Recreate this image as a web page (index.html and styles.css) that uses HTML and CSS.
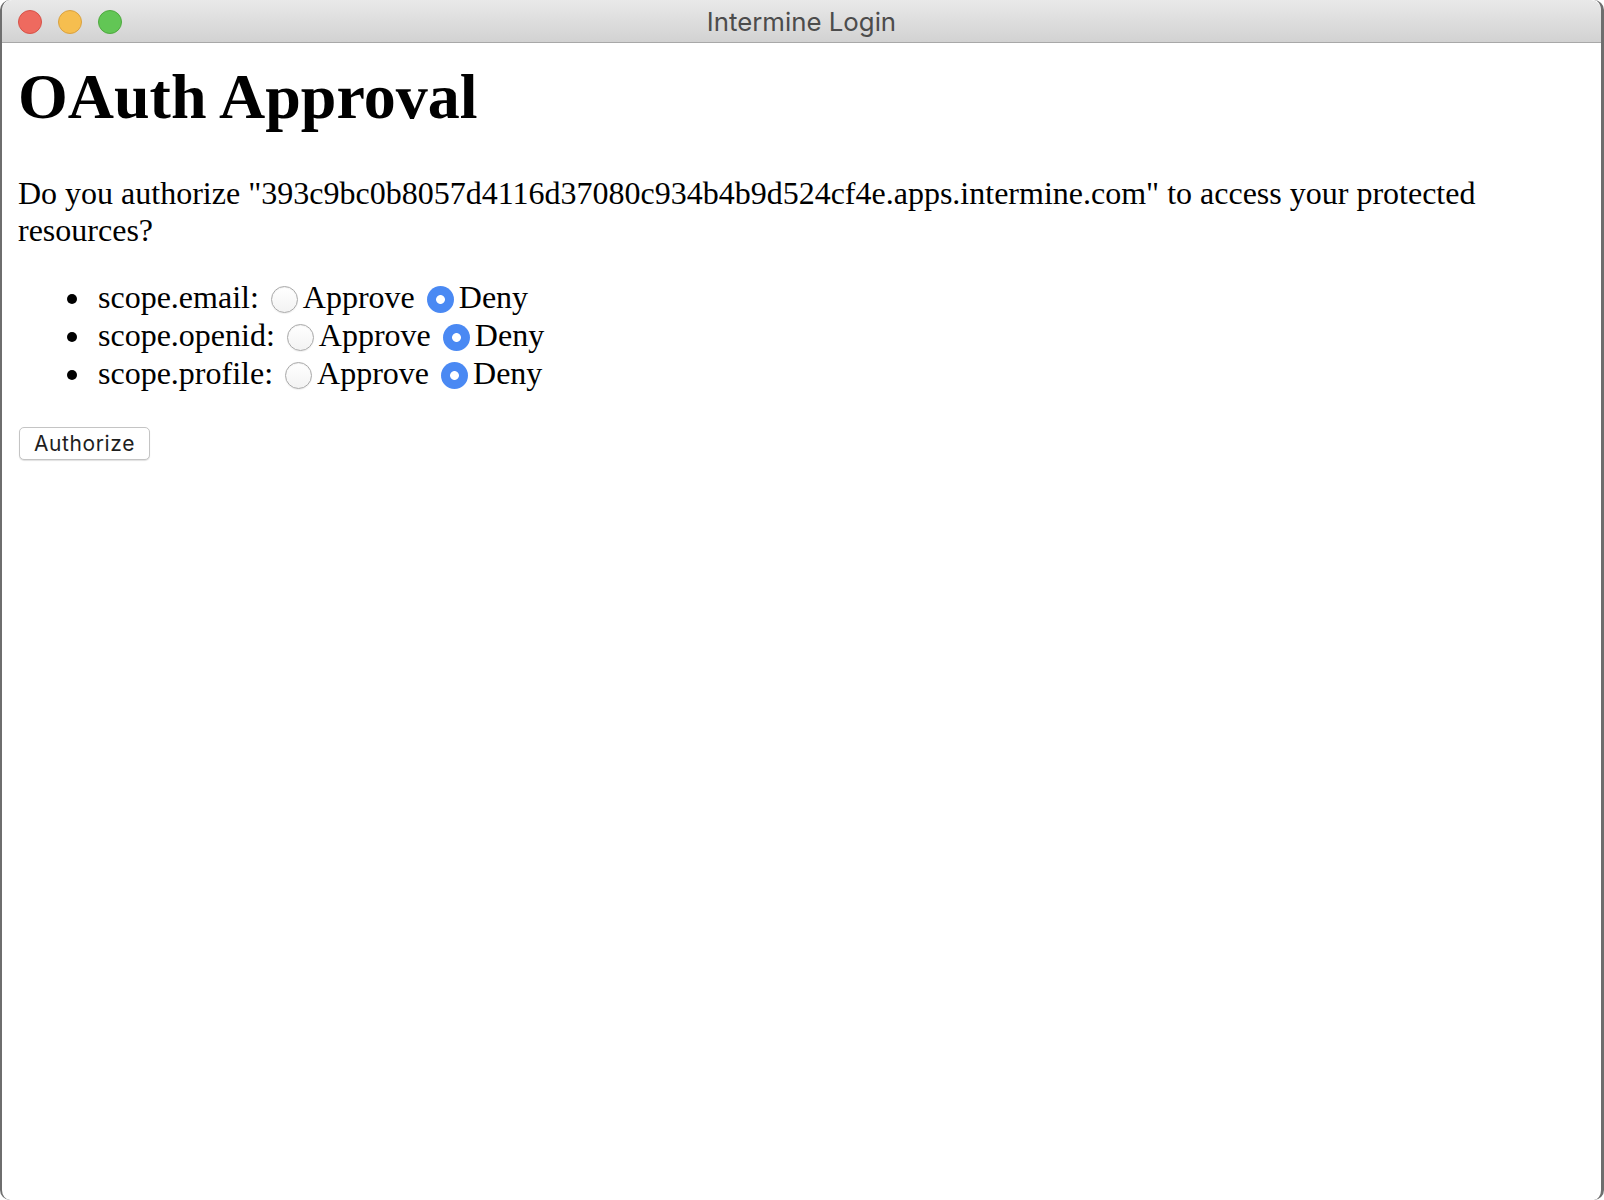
FILE: index.html
```html
<!DOCTYPE html>
<html lang="en">
<head>
<meta charset="utf-8">
<title>Intermine Login</title>
<link rel="stylesheet" href="styles.css">
</head>
<body>
<div class="window">
  <header class="titlebar">
    <div class="lights">
      <span class="light light-close"></span>
      <span class="light light-min"></span>
      <span class="light light-max"></span>
    </div>
    <div class="title">Intermine Login</div>
    <div class="spacer"></div>
  </header>
  <main class="content">
    <h1 class="heading">OAuth Approval</h1>
    <p class="question">Do you authorize "393c9bc0b8057d4116d37080c934b4b9d524cf4e.apps.intermine.com" to access your protected resources?</p>
    <form class="approval">
      <ul class="scopes">
        <li class="scope">scope.email: <input class="radio" type="radio" name="scope.email" value="true">Approve <input class="radio" type="radio" name="scope.email" value="false" checked>Deny</li>
        <li class="scope">scope.openid: <input class="radio" type="radio" name="scope.openid" value="true">Approve <input class="radio" type="radio" name="scope.openid" value="false" checked>Deny</li>
        <li class="scope">scope.profile: <input class="radio" type="radio" name="scope.profile" value="true">Approve <input class="radio" type="radio" name="scope.profile" value="false" checked>Deny</li>
      </ul>
      <button class="authorize" type="button">Authorize</button>
    </form>
  </main>
</div>
</body>
</html>
```

FILE: styles.css
```css
html, body {
  margin: 0;
  padding: 0;
  background: #ffffff;
}

.window {
  box-sizing: border-box;
  width: 1604px;
  height: 1200px;
  border-left: 2px solid #6e6e6e;
  border-right: 3px solid #6e6e6e;
  border-radius: 10px 10px 10px 10px;
  background: #ffffff;
  overflow: hidden;
  display: flex;
  flex-direction: column;
}

.titlebar {
  box-sizing: border-box;
  height: 43px;
  flex: none;
  display: grid;
  grid-template-columns: 1fr auto 1fr;
  align-items: center;
  background: linear-gradient(#e9e9e9, #d2d2d2);
  border-bottom: 1px solid #a8a8a8;
  border-radius: 10px 10px 0 0;
}

.lights {
  display: flex;
  align-items: center;
  gap: 16px;
  padding: 1px 0 0 16px;
}

.light {
  box-sizing: border-box;
  width: 24px;
  height: 24px;
  border-radius: 50%;
}

.light-close {
  background: #ee6a5f;
  border: 1px solid #d65248;
}

.light-min {
  background: #f6be4f;
  border: 1px solid #d9a140;
}

.light-max {
  background: #62c655;
  border: 1px solid #4fa93f;
}

.title {
  font-family: "Inter", "Noto Sans", sans-serif;
  font-size: 25.8px;
  color: #4c4c4c;
  line-height: 42px;
  padding-top: 1px;
}

.content {
  padding: 0 16px;
  font-family: "Liberation Serif", "Times New Roman", serif;
  color: #000000;
}

.heading {
  font-size: 64px;
  font-weight: bold;
  line-height: 74px;
  margin: 17px 0 0;
}

.question {
  font-size: 32px;
  line-height: 36.8px;
  margin: 41px 0 0;
}

.approval {
  margin: 0;
}

.scopes {
  margin: 29px 0 0;
  padding: 0 0 0 75px;
  font-size: 32px;
  line-height: 38px;
  list-style: disc;
}

.scope {
  padding-left: 5px;
}

.radio {
  -webkit-appearance: none;
  appearance: none;
  box-sizing: border-box;
  width: 27px;
  height: 27px;
  margin: 0 5px 0 4px;
  vertical-align: -5px;
  border-radius: 50%;
  border: 1px solid #a9a9a9;
  background: linear-gradient(#ffffff, #f3f3f3);
  box-shadow: inset 0 1px 1px rgba(0, 0, 0, 0.06), 0 1px 1px rgba(0, 0, 0, 0.06);
}

.radio:checked {
  border: none;
  background: radial-gradient(circle, #ffffff 0 4px, #4a89f3 4.8px);
  box-shadow: none;
}

.authorize {
  margin: 35px 0 0 1px;
  box-sizing: border-box;
  height: 33px;
  padding: 0 14px;
  font-family: "Inter", "Noto Sans", sans-serif;
  font-size: 21px;
  letter-spacing: 0.6px;
  color: #1e1e1e;
  background: #ffffff;
  border: 1px solid #c4c4c4;
  border-radius: 5px;
  box-shadow: 0 1px 1px rgba(0, 0, 0, 0.12);
}
```
